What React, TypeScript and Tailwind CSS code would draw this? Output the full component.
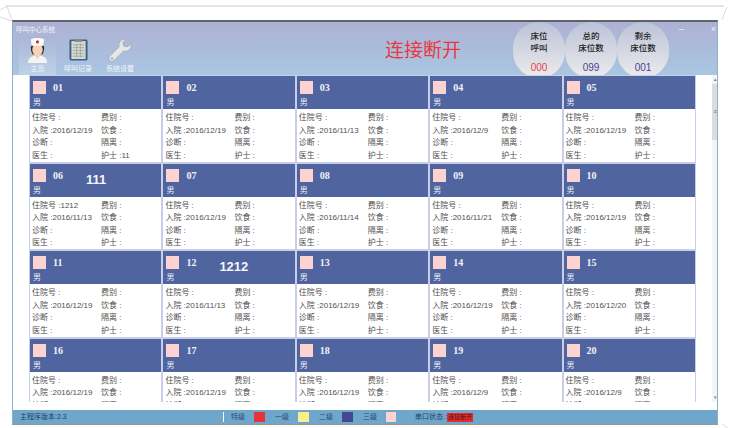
const font = { fontFamily: '"Liberation Sans", "Noto Sans CJK SC", sans-serif' }

interface Bed {
  no: string
  date: string
  zyh?: string
  nurse?: string
  label?: string
}

const beds: Bed[] = [
  { no: "01", date: "2016/12/19", nurse: "11" },
  { no: "02", date: "2016/12/19" },
  { no: "03", date: "2016/11/13" },
  { no: "04", date: "2016/12/9" },
  { no: "05", date: "2016/12/19" },
  { no: "06", date: "2016/11/13", zyh: "1212", label: "111" },
  { no: "07", date: "2016/12/19" },
  { no: "08", date: "2016/11/14" },
  { no: "09", date: "2016/11/21" },
  { no: "10", date: "2016/12/19" },
  { no: "11", date: "2016/12/19" },
  { no: "12", date: "2016/11/13", label: "1212" },
  { no: "13", date: "2016/12/19" },
  { no: "14", date: "2016/12/19" },
  { no: "15", date: "2016/12/20" },
  { no: "16", date: "2016/12/19" },
  { no: "17", date: "2016/12/19" },
  { no: "18", date: "2016/12/19" },
  { no: "19", date: "2016/12/9" },
  { no: "20", date: "2016/12/9" },
]

function NurseIcon() {
  return (
    <svg width="21" height="26" viewBox="0 0 22 27">
      <path d="M1 27c0-5 4-8 10-8s10 3 10 8z" fill="#f4f4f4" />
      <path d="M8 19l3 4 3-4z" fill="#f2cfae" />
      <path d="M4 11c0-5 14-5 14 0 0 3-1 6-2 7h-10c-1-1-2-4-2-7z" fill="#2c2a28" />
      <ellipse cx="11" cy="13" rx="5.500" ry="6.500" fill="#f6d3b4" />
      <path d="M4 2.500c3-2 11-2 14 0l-1 6.500h-12z" fill="#fafafa" />
      <circle cx="11" cy="5" r="1.600" fill="#d8232a" />
    </svg>
  )
}

function RecordIcon() {
  return (
    <svg width="19" height="22" viewBox="0 0 20 23">
      <rect x="0.500" y="0.500" width="19" height="22" rx="1.500" fill="#3c5f86" />
      <rect x="2.500" y="2" width="15" height="19" fill="#d7d9cf" />
      <path d="M4 6h12M4 9h12M4 12h12M4 15h12M4 18h12M8 5v14M12 5v14" stroke="#8f9a94" strokeWidth="0.7" />
      <rect x="6" y="0.500" width="8" height="2.500" fill="#7d8c99" />
    </svg>
  )
}

function WrenchIcon() {
  return (
    <svg width="24" height="25" viewBox="0 0 24 24">
      <path
        d="M23 5.500c.6 3-1 6-4 7-1.200.4-2.200.3-3.300 0L6 22c-1.200 1.200-3 1.200-4.200 0s-1.200-3 0-4.200l9.500-9.700c-.4-1.200-.4-2.300 0-3.500 1-3 4-4.500 7-4L14.800 4l.8 3.500 3.500.9z"
        fill="#e6e6e4"
        stroke="#9aa0a8"
        strokeWidth="0.6"
      />
      <circle cx="4" cy="20" r="1.200" fill="#a9b4c6" />
    </svg>
  )
}

function NavItem({ icon, label, active }: { icon: React.ReactNode; label: string; active?: boolean }) {
  return (
    <div
      className={
        active
          ? "flex h-[39px] w-[37px] flex-col items-center bg-gradient-to-b from-[#aab5d6] to-[#bcd3e8]"
          : "ml-[2px] flex h-[39px] w-[40px] flex-col items-center"
      }
    >
      <div className="flex h-[28px] items-center justify-center">{icon}</div>
      <span className="text-[7px] leading-[9px] text-[#f2f5fa]">{label}</span>
    </div>
  )
}

function Bubble({ top, bottom, value, color }: { top: string; bottom: string; value: string; color: string }) {
  return (
    <div className="flex h-[56px] w-[52px] flex-col items-center rounded-full bg-gradient-to-b from-[#bcc2d8] to-[#ecebec] pt-[8px]">
      <span className="text-[8.500px] font-medium leading-[12px] text-[#222]">{top}</span>
      <span className="text-[8.500px] font-medium leading-[12px] text-[#222]">{bottom}</span>
      <span className={`mt-[8px] text-[10px] leading-[12px] ${color}`}>{value}</span>
    </div>
  )
}

function Row({ left, right }: { left: string; right: string }) {
  return (
    <div className="flex h-[12.500px] items-center text-[8px] text-[#505050]">
      <span className="w-[69px] whitespace-nowrap">{left}</span>
      <span className="whitespace-nowrap">{right}</span>
    </div>
  )
}

function BedCard({ bed }: { bed: Bed }) {
  return (
    <div className="flex h-[87.500px] flex-col border border-[#c9cee8] bg-white">
      <div className="h-[33px] shrink-0 bg-[#50659f] pl-[3px] pt-[5px]">
        <div className="flex h-[17px] items-start">
          <div className="h-[13px] w-[13px] bg-[#fcd3d0]" />
          <span
            className="ml-[7px] w-[33px] text-[10px] font-bold leading-[14px] text-[#f0f2f8]"
            style={{ fontFamily: '"Liberation Serif", serif' }}
          >
            {bed.no}
          </span>
          {bed.label && (
            <span className="mt-[3px] text-[13px] font-bold leading-[15px] text-[#f4f6fb]">{bed.label}</span>
          )}
        </div>
        <div className="text-[8px] leading-[9px] text-[#e8ecf6]">男</div>
      </div>
      <div className="pl-[2px] pt-[3px]">
        <Row left={`住院号 :${bed.zyh ?? ""}`} right="费别 :" />
        <Row left={`入院 :${bed.date}`} right="饮食 :" />
        <Row left="诊断 :" right="隔离 :" />
        {Number(bed.no) <= 15 && <Row left="医生 :" right={`护士 :${bed.nurse ?? ""}`} />}
      </div>
    </div>
  )
}

function Legend({ swatch, label }: { swatch: string; label: string }) {
  return (
    <div className="flex w-[44px] items-center">
      <span className={`h-[10px] w-[11px] shrink-0 ${swatch}`} />
      <span className="ml-[10px] whitespace-nowrap text-[7px] leading-[10px] text-[#33496a]">{label}</span>
    </div>
  )
}

export default function App() {
  return (
    <div className="relative h-[428px] w-[730px] overflow-hidden bg-white" style={font}>
      <svg className="absolute left-0 top-0" width="730" height="428" viewBox="0 0 730 428" fill="none">
        <path d="M0 10L7 6L12 21L0 17" stroke="#dcdcdc" />
        <path d="M722 20L727 7" stroke="#dcdcdc" />
        <path d="M722 424L728 428" stroke="#dcdcdc" />
      </svg>
      <div className="h-[5px]" />
      <div className="mx-[6px] h-[2px] bg-[#e6e6e6]" />
      <div className="h-[13px]" />
      <div className="relative mx-[12px] flex h-[405px] flex-col border-x border-[#8fb0cf] border-t-2 border-t-[#5d6468] border-b-[3px] border-b-[#9a958a] bg-white">
        <div className="flex h-[53px] shrink-0 overflow-hidden bg-gradient-to-b from-[#adb1d3] to-[#a9c6e2]">
          <div className="w-[290px] shrink-0 pl-[3px] pt-[3px]">
            <div className="text-[6.500px] leading-[9px] text-[#f2f4fa]">呼叫中心系统</div>
            <div className="ml-[3px] mt-[2px] flex">
              <NavItem icon={<NurseIcon />} label="主页" active />
              <NavItem icon={<RecordIcon />} label="呼叫记录" />
              <NavItem icon={<WrenchIcon />} label="系统设置" />
            </div>
          </div>
          <div className="ml-[82px] w-[128px] shrink-0 pt-[16px] text-[19px] leading-[26px] text-[#e8383f]">连接断开</div>
          <div className="flex shrink-0">
            <Bubble top="床位" bottom="呼叫" value="000" color="text-[#e8404a]" />
            <Bubble top="总的" bottom="床位数" value="099" color="text-[#4a4296]" />
            <Bubble top="剩余" bottom="床位数" value="001" color="text-[#4a4296]" />
          </div>
          <div className="ml-[10px] flex h-[16px] w-[40px] shrink-0 items-center justify-between pr-[3px] text-[9px] text-[#f2f4fa]">
            <span>–</span>
            <span>×</span>
          </div>
        </div>
        <div className="flex h-[327px] shrink-0 overflow-hidden">
          <div className="ml-[16px] grid w-[667px] shrink-0 grid-cols-5 content-start">
            {beds.map((b) => (
              <BedCard key={b.no} bed={b} />
            ))}
          </div>
          <div className="ml-[16px] flex w-[9px] flex-col items-center bg-[#f4f4f4] text-[#777]">
            <span className="h-[9px] text-[5px] leading-[9px]">▴</span>
            <div className="flex h-[56px] w-[7px] items-center justify-center bg-[#dcdcdc] text-[5px] text-[#666]">≡</div>
            <div className="flex-1" />
            <span className="h-[9px] text-[5px] leading-[9px]">▾</span>
          </div>
        </div>
        <div className="h-[8px] shrink-0" />
        <div className="flex h-[14px] shrink-0 items-center bg-[#6fa6cc]">
          <span className="ml-[7px] w-[203px] shrink-0 text-[7px] leading-[10px] text-[#28405f]">主程序版本:2.3</span>
          <div className="h-[10px] w-[1px] bg-white" />
          <span className="ml-[7px] w-[23px] text-[7px] leading-[10px] text-[#33496a]">特级</span>
          <Legend swatch="bg-[#e8323a]" label="一级" />
          <Legend swatch="bg-[#f9ef8c]" label="二级" />
          <Legend swatch="bg-[#44488f]" label="三级" />
          <span className="h-[10px] w-[10px] bg-[#fcd3d0]" />
          <span className="ml-[19px] whitespace-nowrap text-[7px] leading-[10px] text-[#28405f]">串口状态 :</span>
          <span className="bg-[#e32a2c] px-[1px] text-[6px] leading-[9px] text-[#5a1518]">连接断开</span>
        </div>
      </div>
    </div>
  )
}
